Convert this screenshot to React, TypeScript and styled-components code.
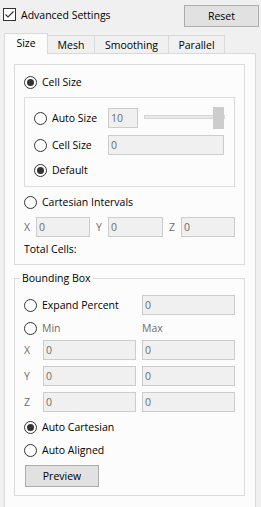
import React from "react";
import styled, { createGlobalStyle } from "styled-components";

const GlobalStyle = createGlobalStyle`
  html, body {
    margin: 0;
    padding: 0;
    background: #f0f0f0;
    overflow: hidden;
  }
  body {
    font-family: "Open Sans", "Noto Sans", sans-serif;
    font-size: 10.5px;
    color: #000000;
  }
  * {
    box-sizing: border-box;
  }
`;

const Window = styled.div`
  width: 261px;
  height: 520px;
  display: flex;
  flex-direction: column;
  background: #f0f0f0;
`;

const Header = styled.div`
  display: flex;
  align-items: flex-start;
  justify-content: space-between;
  margin-top: 5px;
  padding: 0 2px 0 3px;
`;

const CheckRow = styled.label`
  display: flex;
  align-items: center;
  gap: 5px;
  height: 17px;
  margin-top: 1px;
`;

const CheckBox = styled.span`
  width: 13px;
  height: 13px;
  border: 1px solid #333333;
  background: #ffffff;
  display: flex;
  align-items: center;
  justify-content: center;
`;

const Button = styled.button<{ $width: number }>`
  width: ${(p) => p.$width}px;
  height: 22px;
  border: 1px solid #adadad;
  background: #e1e1e1;
  font: inherit;
  color: #000000;
  padding: 0;
  margin-left: ${(p) => (p.$width === 74 ? "1px" : "0")};
`;

const TabBar = styled.div`
  display: flex;
  align-items: flex-end;
  height: 20px;
  margin-top: 6px;
  padding-left: 4px;
`;

const Tab = styled.div<{ $active?: boolean; $width: number; $first?: boolean }>`
  width: ${(p) => p.$width}px;
  height: ${(p) => (p.$active ? 21 : 18)}px;
  margin-bottom: ${(p) => (p.$active ? -1 : 0)}px;
  position: relative;
  z-index: ${(p) => (p.$active ? 1 : 0)};
  display: flex;
  align-items: center;
  justify-content: center;
  padding-bottom: ${(p) => (p.$active ? 2 : 0)}px;
  border-top: 1px solid #d9d9d9;
  border-right: 1px solid #d9d9d9;
  border-left: ${(p) => (p.$first ? "1px solid #d9d9d9" : "none")};
  background: ${(p) => (p.$active ? "#fcfcfc" : "#f0f0f0")};
`;

const Panel = styled.div`
  flex: 1;
  width: 252px;
  margin-left: 4px;
  border: 1px solid #d9d9d9;
  background: #fcfcfc;
  padding: 10px 10px 0 9px;
`;

const Group = styled.div`
  border: 1px solid #dcdcdc;
  padding: 7px 9px 7px 9px;
`;

const InnerGroup = styled.div`
  border: 1px solid #dcdcdc;
  margin-top: 5px;
  padding: 10px 10px 6px 9px;
`;

const FieldSet = styled.fieldset`
  margin: 5px 0 0 0;
  border: 1px solid #dcdcdc;
  padding: 0 9px 8px 9px;
  min-width: 0;
`;

const Legend = styled.legend`
  line-height: 16px;
  height: 16px;
  padding: 0 2px;
  margin-left: -4px;
`;

const Row = styled.div<{ $mt?: number; $h?: number }>`
  display: flex;
  align-items: center;
  height: ${(p) => p.$h ?? 20}px;
  margin-top: ${(p) => p.$mt ?? 0}px;
`;

const RadioLabel = styled.label<{ $width?: number; $dim?: boolean }>`
  display: flex;
  align-items: center;
  gap: 5px;
  width: ${(p) => (p.$width ? `${p.$width}px` : "auto")};
  flex-shrink: 0;
  color: ${(p) => (p.$dim ? "#6d6d6d" : "#000000")};
`;

const RadioDot = styled.span<{ $checked?: boolean }>`
  width: 13px;
  height: 13px;
  border-radius: 50%;
  border: 1px solid #333333;
  background: #ffffff;
  display: flex;
  align-items: center;
  justify-content: center;
  flex-shrink: 0;

  &::after {
    content: "";
    display: ${(p) => (p.$checked ? "block" : "none")};
    width: 7px;
    height: 7px;
    border-radius: 50%;
    background: #333333;
  }
`;

const Field = styled.input<{ $width?: number; $ml?: number }>`
  width: ${(p) => (p.$width ? `${p.$width}px` : "auto")};
  flex: ${(p) => (p.$width ? "none" : "1")};
  min-width: 0;
  height: 20px;
  margin: 0 0 0 ${(p) => p.$ml ?? 0}px;
  border: 1px solid #cccccc;
  background: #f0f0f0;
  font: inherit;
  color: #6d6d6d;
  -webkit-text-fill-color: #6d6d6d;
  opacity: 1;
  padding: 0 0 0 2px;
  outline: none;
`;

const AxisLabel = styled.span<{ $width: number; $pad?: number }>`
  width: ${(p) => p.$width}px;
  padding-left: ${(p) => p.$pad ?? 0}px;
  flex-shrink: 0;
  color: #6d6d6d;
`;

const DimText = styled.span`
  color: #6d6d6d;
`;

const Slider = styled.div`
  position: relative;
  width: 82px;
  height: 22px;
  margin-left: 6px;
  display: flex;
  align-items: flex-start;
`;

const Track = styled.div`
  width: 81px;
  height: 4px;
  margin-top: 8px;
  background: #e7eaea;
  border: 1px solid #d6d6d6;
`;

const Thumb = styled.div`
  position: absolute;
  right: 1px;
  top: 0;
  width: 11px;
  height: 22px;
  background: #cdcdcd;
`;

function Radio({
  label,
  checked,
  width,
  dim,
}: {
  label: string;
  checked?: boolean;
  width?: number;
  dim?: boolean;
}) {
  return (
    <RadioLabel $width={width} $dim={dim}>
      <RadioDot $checked={checked} />
      {label}
    </RadioLabel>
  );
}

export default function App() {
  return (
    <Window>
      <GlobalStyle />
      <Header>
        <CheckRow>
          <CheckBox>
            <svg width="11" height="11" viewBox="0 0 11 11">
              <path d="M1.5 5.5 L4 8 L9.5 2.5" fill="none" stroke="#333333" strokeWidth="1.1" />
            </svg>
          </CheckBox>
          Advanced Settings
        </CheckRow>
        <Button $width={75}>Reset</Button>
      </Header>

      <TabBar>
        <Tab $active $first $width={44}>Size</Tab>
        <Tab $width={47}>Mesh</Tab>
        <Tab $width={74}>Smoothing</Tab>
        <Tab $width={56}>Parallel</Tab>
      </TabBar>

      <Panel>
        <Group>
          <Row>
            <Radio label="Cell Size" checked />
          </Row>
          <InnerGroup>
            <Row>
              <Radio label="Auto Size" width={74} />
              <Field $width={30} disabled value="10" readOnly />
              <Slider>
                <Track />
                <Thumb />
              </Slider>
            </Row>
            <Row $mt={7}>
              <Radio label="Cell Size" width={74} />
              <Field disabled value="0" readOnly />
            </Row>
            <Row $mt={5}>
              <Radio label="Default" checked />
            </Row>
          </InnerGroup>
          <Row $mt={5}>
            <Radio label="Cartesian Intervals" />
          </Row>
          <Row $mt={5}>
            <AxisLabel $width={12}>X</AxisLabel>
            <Field $width={54} disabled value="0" readOnly />
            <AxisLabel $width={18} $pad={6}>Y</AxisLabel>
            <Field $width={55} disabled value="0" readOnly />
            <AxisLabel $width={18} $pad={6}>Z</AxisLabel>
            <Field $width={54} disabled value="0" readOnly />
          </Row>
          <Row $mt={4} $h={16}>
            Total Cells:
          </Row>
        </Group>

        <FieldSet>
          <Legend>Bounding Box</Legend>
          <Row $mt={9}>
            <Radio label="Expand Percent" width={118} />
            <Field $width={93} disabled value="0" readOnly />
          </Row>
          <Row $mt={3}>
            <Radio label="Min" width={118} dim />
            <DimText>Max</DimText>
          </Row>
          {["X", "Y", "Z"].map((axis, i) => (
            <Row key={`bbox-${axis}`} $mt={i === 0 ? 2 : 6}>
              <AxisLabel $width={19}>{axis}</AxisLabel>
              <Field $width={93} disabled value="0" readOnly />
              <Field $width={93} $ml={6} disabled value="0" readOnly />
            </Row>
          ))}
          <Row $mt={5}>
            <Radio label="Auto Cartesian" checked />
          </Row>
          <Row $mt={3}>
            <Radio label="Auto Aligned" />
          </Row>
          <Row $mt={5} $h={22}>
            <Button $width={74}>Preview</Button>
          </Row>
        </FieldSet>
      </Panel>
    </Window>
  );
}
